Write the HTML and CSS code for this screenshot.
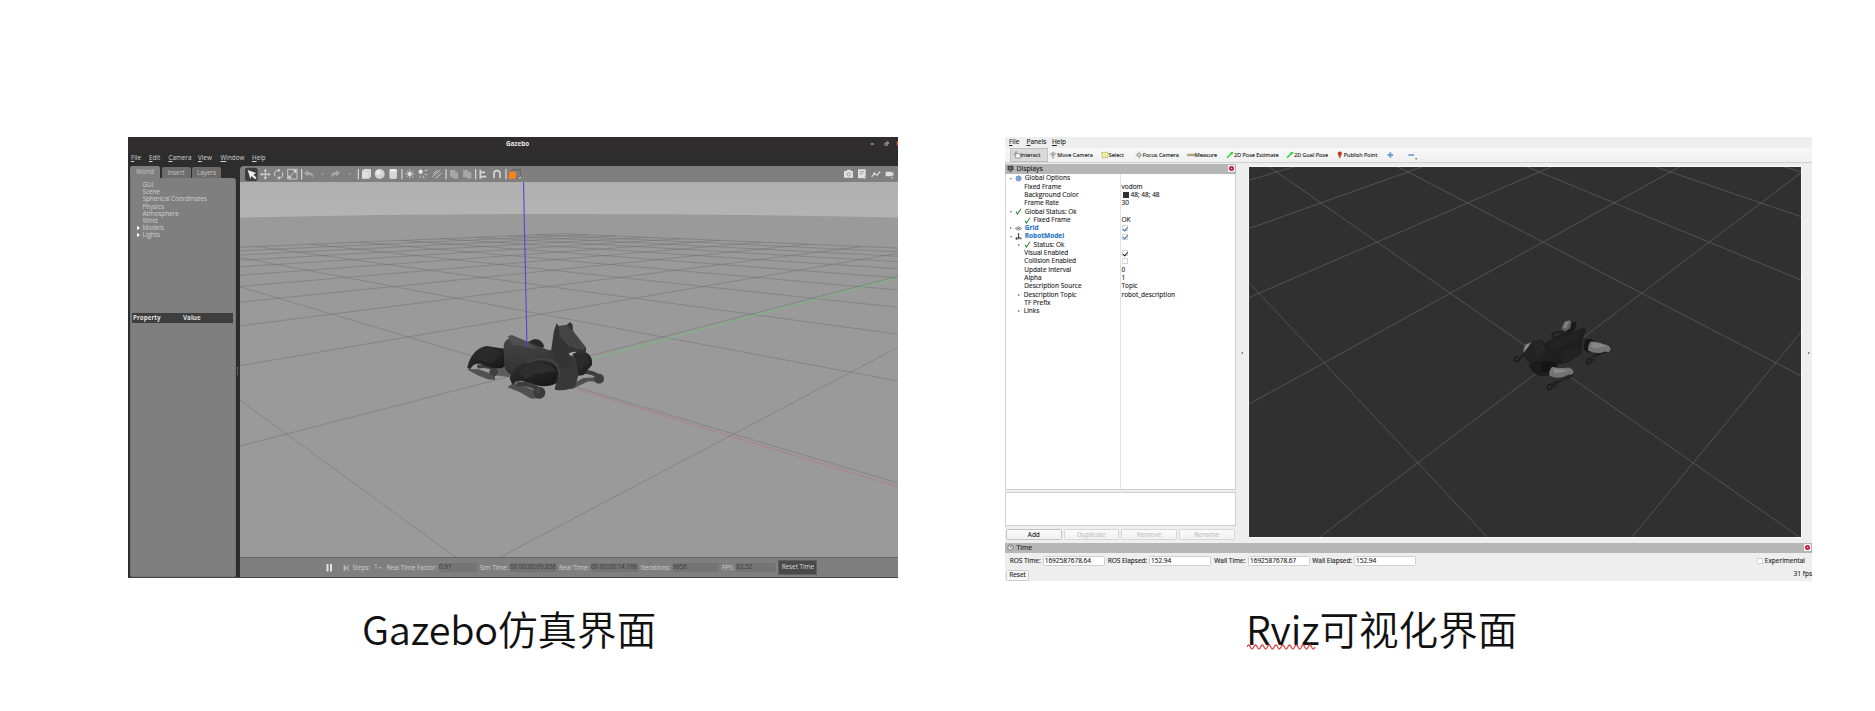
FILE: index.html
```
<!DOCTYPE html>
<html>
<head>
<meta charset="utf-8">
<title>Gazebo / Rviz</title>
<link rel="stylesheet" href="styles.css">
</head>
<body>
<main class="slide">
<figure class="shot shot-gazebo">
  <div class="gazebo">
    <header class="gz-title"><span class="gz-name">Gazebo</span>
      <svg class="gz-winbtns" viewBox="1110 22 84 42"><path d="M1112 43h10" stroke="#c8c8c8" stroke-width="3"/><path d="M1155 40h7v7h-7zM1158 37h7v7" fill="none" stroke="#bbb" stroke-width="2.4"/><rect x="1190" y="35" width="4" height="13" fill="#d9572b"/></svg>
    </header>
    <nav class="gz-menu"><span><u>F</u>ile</span><span><u>E</u>dit</span><span><u>C</u>amera</span><span><u>V</u>iew</span><span><u>W</u>indow</span><span><u>H</u>elp</span></nav>
    <div class="gz-main">
      <aside class="gz-side">
        <div class="gz-tabs"><span class="on">World</span><span>Insert</span><span>Layers</span></div>
        <div class="gz-panel">
          <ul class="gz-tree"><li>GUI</li><li>Scene</li><li>Spherical Coordinates</li><li>Physics</li><li>Atmosphere</li><li>Wind</li><li class="branch">Models</li><li class="branch">Lights</li></ul>
          <div class="gz-props"><span>Property</span><span>Value</span></div>
        </div>
      </aside>
      <div class="gz-split"><i></i></div>
      <section class="gz-view">
        <svg class="gz-tools" viewBox="360 108 1974 48">
          <rect x="375" y="113" width="38" height="40" rx="8" fill="#3d3d3d"/>
          <path d="M383 120l26 9-9 5 10 9-5 5-10-10-4 8z" fill="#eee"/>
          <g fill="none" stroke="#d6d6d6" stroke-width="3">
            <path d="M436 121v24M424 133h24"/>
            <path d="M466 139a11 11 0 0 1 11-18M486 126a11 11 0 0 1-10 18"/>
            <path d="M503 118h28v29h-28zM507 143l20-21" stroke-width="2.5"/>
            <path d="M940 132l13-12M937 141l24-21M946 146l18-16" stroke-width="2.6"/>
            <path d="M1081 119v27M1083 127h12M1083 140h16" stroke-width="5"/>
            <path d="M1122 145v-14a9 9 0 0 1 18 0v14" stroke-width="5"/>
          </g>
          <path d="M436 117l5 7h-10zM436 149l5-7h-10zM420 133l7-5v10zM452 133l-7-5v10zM474 116l8 5-7 6zM479 149l-8-5 7-6zM518 120h11v11zM505 134v11h11z" fill="#d6d6d6"/>
          <path d="M545 117v31M715 117v31M846 117v31M978 117v31M1067 117v31M1158 117v31" stroke="#ddd" stroke-width="3.4"/>
          <g fill="#a6a6a6"><path d="M552 129l12-9v6c12 0 18 8 17 18-4-8-9-9-17-9v5zM660 129l-12-9v6c-12 0-16 8-15 17 4-7 8-8 15-8v5zM604 130h8l-4 5zM685 130h8l-4 5zM990 120h16v22h-16zM1000 127h14v19h-14zM1029 120h15v22h-15zM1042 125h12v21h-12z"/></g>
          <path d="M726 122l7-5h20v22l-6 7h-21z" fill="#dedede"/><path d="M726 123h21l6-6M747 123v23" stroke="#bdbdbd" stroke-width="1.5" fill="none"/>
          <circle cx="779" cy="132" r="15" fill="#d4d4d4"/><circle cx="775" cy="127" r="7" fill="#ececec"/>
          <rect x="808" y="117" width="23" height="30" rx="6" fill="#d6d6d6"/><ellipse cx="819.500" cy="121" rx="11" ry="4" fill="#eee"/>
          <circle cx="869" cy="132" r="6" fill="#e4e4e4"/><path d="M869 118v28M855 132h28M859 122l20 20M879 122l-20 20" stroke="#d8d8d8" stroke-width="2.2"/>
          <circle cx="902" cy="125" r="6.500" fill="#e4e4e4"/><path d="M914 122l9-2M914 132l8 3M908 137l5 9M900 137v6" stroke="#ccc" stroke-width="3"/>
          <path d="M1170 125l10-7h21v20l-12 8M1188 125l12-7M1181 118v8" fill="none" stroke="#5c5c5c" stroke-width="2.400"/><rect x="1167" y="125" width="20" height="21" fill="#ff8410"/><path d="M1195 142h9l-4.500 5z" fill="#ccc"/>
          <path d="M2172 123h7l3-4h9l3 4h5v20h-27z" fill="#e0e0e0"/><circle cx="2186" cy="133" r="5" fill="#e0e0e0" stroke="#888" stroke-width="2"/>
          <path d="M2214 118h23v18l-5 9h-18z" fill="#e0e0e0"/><path d="M2219 125h13M2219 131h10" stroke="#8b8b8b" stroke-width="2"/><path d="M2234 134v10M2229 140l5 6 5-6" stroke="#ddd" stroke-width="2.4" fill="none"/>
          <path d="M2255 141l8-10 8 5 9-11" stroke="#e0e0e0" stroke-width="3.5" fill="none"/><circle cx="2263" cy="130" r="3" fill="#ddd"/>
          <path d="M2297 125h18v14h-18zM2315 130l5-4v13l-5-4z" fill="#e0e0e0"/><path d="M2312 142h9l-4 4z" fill="#ccc"/>
        </svg>
        <svg class="gz-scene" viewBox="240 182 658 375">
          <defs>
            <linearGradient id="sky" x1="0" y1="0" x2="0" y2="1"><stop offset="0" stop-color="#b0b0b0"/><stop offset="1" stop-color="#b4b4b4"/></linearGradient>
            <linearGradient id="hide" x1="0" y1="0" x2="0" y2="1"><stop offset="0" stop-color="#464646"/><stop offset="1" stop-color="#2c2c2c"/></linearGradient>
            <linearGradient id="leg" x1="0" y1="0" x2="1" y2="1"><stop offset="0" stop-color="#303030"/><stop offset="1" stop-color="#161616"/></linearGradient>
          </defs>
          <rect x="240" y="182" width="658" height="40" fill="url(#sky)"/>
          <path d="M240 217.500Q569 210.500 898 217.500V557H240z" fill="#9a9a9a"/>
          <g id="gz-grid" class="gz-grid"></g>
          <path d="M592 359L757 314.500 898 277.500" class="axis-y"/>
          <path d="M568 386.500L898 487" class="axis-x"/>
          <g transform="translate(440 300) scale(.33333)">
            <path d="M80 208l35 0 50 18 0 14-22-2-30-12zM202 262l20-14 60 22 20 24-28 2-35-20zM380 262l50-28 40-2 20 14-45-2-50 24z" fill="#505050"/>
            <path d="M165 202l40 0 10 30-50-6z" fill="#5c5c5c"/>
            <path d="M112 200q25-4 46 4" stroke="#404040" stroke-width="11" fill="none"/><circle cx="161" cy="216" r="13" fill="#404040"/>
            <path d="M82 203c6-34 30-62 58-65l54 8 14 46-22 12c-28 4-52-6-64-12-16-4-26 4-31 16z" fill="url(#leg)"/>
            <path d="M108 168l38-28 40 18-30 32-40-10z" fill="#2c2c2c" opacity=".7"/>
            <path d="M255 130l28-13q24 0 30 25l-45 8z" fill="#292929"/>
            <path d="M420 217q35-4 55 12" stroke="#3c3c3c" stroke-width="12" fill="none"/><circle cx="477" cy="236" r="15" fill="#404040"/>
            <path d="M400 165l38-8q22 14 18 38l-26 30-32 5z" fill="#222"/><path d="M405 170l34-10 10 25-30 25z" fill="#2c2c2c"/>
            <path d="M204 109l12-3 46 19 38 16 40 14 6 84-50 12-62-18c-28-8-42-20-42-46l0-28q-6-36 16-44z" fill="url(#hide)"/>
            <path d="M204 109l12-3 46 19 30 24-46-12-28-2z" fill="#505050"/>
            <path d="M192 190l42 16 56-20 30-36M222 140l24 60 80-30" stroke="#393939" stroke-width="2" fill="none"/>
            <path d="M318 155l22-8 28 16 40 10 8 50-10 36q-26 16-62 10l10-50z" fill="#383838"/>
            <path d="M334 148l8-56 8-22 6 8 24-3 10-9 8 8 1 20 38 48q4 12-4 18l-34 6-22 44-34-36z" fill="#333"/>
            <path d="M356 80l24-3 18 14 38 50-5 10-42-10-30-32z" fill="#454545"/><path d="M382 85l38 60M368 92l32 50M356 104l20 58" stroke="#393939" stroke-width="2"/>
            <path d="M386 160l12-4 12-1-2 5-8 3-8 6z" fill="#aaa"/><path d="M400 160l38-10-5 12-30 5z" fill="#313131"/>
            <path d="M209 235q14-48 80-54 54 2 68 30l-8 38q-26 16-64 6l-30-10q-22-8-38 9z" fill="url(#leg)"/>
            <path d="M235 214l48-30 46 10 20 20-60 8-34 14z" fill="#303030" opacity=".85"/>
            <path d="M260 190q42-22 78-6 20 14 21 50" stroke="#444" stroke-width="5" fill="none"/>
            <path d="M230 252q50-2 66 20" stroke="#3e3e3e" stroke-width="14" fill="none"/><circle cx="298" cy="278" r="18" fill="#3a3a3a"/><circle cx="294" cy="272" r="9" fill="#444"/>
          </g>
          <path d="M523.500 182L527 347" class="axis-z"/>
        </svg>
        <footer class="gz-bar">
          <svg class="pause" viewBox="0 0 8 10"><path d="M1.500 1v7.500M5 1v7.500" stroke="#e2e2e2" stroke-width="2"/></svg>
          <svg class="pause" viewBox="0 0 8 10"><path d="M1 2v6l3-3zM5.200 1.500v7" stroke="#b5b5b5" stroke-width=".9" fill="#b5b5b5"/></svg>
          <span>Steps:</span><span>1 <small>▾</small></span><span>Real Time Factor:</span><b>0.97</b><span>Sim Time:</span><b>00 00:00:09.856</b><span>Real Time:</span><b>00 00:00:14.106</b><span>Iterations:</span><b>9856</b><span>FPS:</span><b>62.52</b><span class="gz-reset">Reset Time</span>
        </footer>
      </section>
    </div>
  </div>
  <figcaption><span class="lat">Gazebo</span>仿真界面</figcaption>
</figure>

<figure class="shot shot-rviz">
  <div class="rviz">
    <nav class="rv-menu"><span><u>F</u>ile</span><span><u>P</u>anels</span><span><u>H</u>elp</span></nav>
    <div class="rv-tools">
      <span class="on"><svg viewBox="0 0 24 24"><path d="M8 21V10L4 12V8l4-1V2h3v7h11v12z" fill="#fff" stroke="#555" stroke-width="1.600"/></svg>Interact</span>
      <span><svg viewBox="0 0 24 24"><path d="M2 9l10-6 10 6-10 5zM12 2v20M7 17l5 5 5-5" fill="none" stroke="#999" stroke-width="2"/><circle cx="12" cy="11" r="4" fill="#999"/></svg>Move Camera</span>
      <span><svg viewBox="0 0 24 24"><path d="M3 4h18v16H3z" fill="#f8f2a0" stroke="#8a8430" stroke-width="2" stroke-dasharray="3 2"/></svg>Select</span>
      <span><svg viewBox="0 0 24 24"><path d="M12 1v22M1 12h22" stroke="#999" stroke-width="2"/><circle cx="12" cy="12" r="6" fill="none" stroke="#999" stroke-width="2.500"/></svg>Focus Camera</span>
      <span><svg viewBox="0 0 24 24"><path d="M1 9h23v6H1z" fill="#b5ad7c" stroke="#8e8863"/></svg>Measure</span>
      <span><svg viewBox="0 0 24 24"><path d="M3 20L20 4" stroke="#15d62a" stroke-width="4"/><path d="M12 5l10-3-4 9z" fill="#15d62a"/></svg>2D Pose Estimate</span>
      <span><svg viewBox="0 0 24 24"><path d="M3 20L20 4" stroke="#15d62a" stroke-width="4"/><path d="M12 5l10-3-4 9z" fill="#15d62a"/></svg>2D Goal Pose</span>
      <span><svg class="pin" viewBox="0 0 18 24"><path d="M8 23l-6-15a6 6 0 0 1 13 0z" fill="#c9462c"/><circle cx="8.500" cy="7" r="2.500" fill="#7c2115"/></svg>Publish Point</span>
      <span><svg viewBox="0 0 24 24"><path d="M10 4v16M2 12h16" stroke="#6d9bd0" stroke-width="5.500"/></svg></span>
      <span><svg viewBox="0 0 30 24" class="wide"><path d="M1 12h17" stroke="#6d9bd0" stroke-width="5"/><path d="M21 22h7l-3.500 4z" fill="#555"/></svg></span>
    </div>
    <div class="rv-main">
      <aside class="rv-displays">
        <div class="rv-head"><svg viewBox="0 0 24 24"><path d="M2 3h20v15H2z" fill="#343434"/><path d="M5 6h5v9H5z" fill="#b53b4c"/><path d="M10 6h4v9h-4z" fill="#3c9a53"/><path d="M14 6h5v9h-5z" fill="#4b5eb5"/><path d="M7 21h10" stroke="#333" stroke-width="3"/></svg><span>Displays</span><i class="close"></i></div>
        <ul class="rv-tree">
          <li><em><i class="open"></i><svg viewBox="0 0 20 20"><circle cx="10" cy="10" r="7" fill="#7da5dc" stroke="#4b79b9" stroke-width="3" stroke-dasharray="3 2"/></svg>Global Options</em></li>
          <li><em class="leaf">Fixed Frame</em><span>vodom</span></li>
          <li><em class="leaf">Background Color</em><span><i class="swatch"></i>48; 48; 48</span></li>
          <li><em class="leaf">Frame Rate</em><span>30</span></li>
          <li><em><i class="open"></i><svg viewBox="0 0 20 20"><path d="M3 11l4 6L17 2" class="tick"/></svg>Global Status: Ok</em></li>
          <li><em class="sub"><i></i><svg viewBox="0 0 20 20"><path d="M3 11l4 6L17 2" class="tick"/></svg>Fixed Frame</em><span>OK</span></li>
          <li><em class="hot"><i class="shut"></i><svg viewBox="0 0 20 20"><path d="M1 10l9-5 9 5-9 5zM5 7l10 6M15 7L5 13" fill="none" stroke="#666" stroke-width="2"/></svg>Grid</em><span><i class="box blue"></i></span></li>
          <li><em class="hot"><i class="open"></i><svg viewBox="0 0 20 20"><path d="M8 1h4v5H8zM9 6h3v7H9zM2 13h5v6H2zM9 14h4v4H9zM15 14h4v4h-4zM4 12h12v2H4z" fill="#444"/></svg>RobotModel</em><span><i class="box blue"></i></span></li>
          <li><em class="sub"><i class="shut"></i><svg viewBox="0 0 20 20"><path d="M3 11l4 6L17 2" class="tick"/></svg>Status: Ok</em></li>
          <li><em class="leaf">Visual Enabled</em><span><i class="box dark"></i></span></li>
          <li><em class="leaf">Collision Enabled</em><span><i class="box"></i></span></li>
          <li><em class="leaf">Update Interval</em><span>0</span></li>
          <li><em class="leaf">Alpha</em><span>1</span></li>
          <li><em class="leaf">Description Source</em><span>Topic</span></li>
          <li><em class="sub"><i class="shut"></i>Description Topic</em><span>robot_description</span></li>
          <li><em class="leaf">TF Prefix</em></li>
          <li><em class="sub"><i class="shut"></i>Links</em></li>
        </ul>
        <div class="rv-help"></div>
        <div class="rv-buttons"><span class="live">Add</span><span>Duplicate</span><span>Remove</span><span>Rename</span></div>
      </aside>
      <div class="rv-grip"><i class="left"></i></div>
      <svg class="rv-scene" viewBox="1249.500 167.500 552 369.500">
        <g id="rv-grid" class="rv-grid"></g>
        <g transform="translate(1480 300) scale(.33333)">
          <g fill="none" stroke="#1c1c1c" stroke-width="5" stroke-linecap="round"><path d="M132 164l-12 16q-10 12-15 2 0-14 12-8M252 96l-28 4q-12 8-2 15 12 0 22-8M392 140l-10 16-40 14-10 20q-14 8-10-6 8-12 20-2M280 224l-10 10-44 14-10 18q-14 12-12-6 6-10 14-2" /></g>
          <path d="M386 146l-38 18-14 18M272 230l-36 18-16 16" stroke="#242424" stroke-width="8" fill="none"/>
          <path d="M130 154l8-20 18-6 6 20-24 18z" fill="#696969"/><path d="M134 146l8-12 10-2-12 22z" fill="#888"/>
          <path d="M245 88l10-22 14-4 12 8-2 16-20 12z" fill="#606060"/><path d="M250 84l8-18 12 0-10 20z" fill="#808080"/>
          <path d="M276 66l14 2 0 16-10 12-26 2 18-12z" fill="#1a1a1a"/>
          <path d="M190 134l60-34 36-4 28-14 4 8-10 42-2 30-42 28-46 8-30-10z" fill="#1f1f1f"/>
          <path d="M200 140l60-32 52-18-26 32-40 22zM240 160l52-22 12 20-48 32z" fill="#232323"/>
          <path d="M132 162l26-36 26-6 12 10 10 30-16 24-28 10-24-12z" fill="#222"/><path d="M160 130l24-4 14 20-24 30z" fill="#272727"/>
          <path d="M148 192l26-6 26-2 30 4 6 18-12 20-40 4q-32-10-36-38z" fill="#1c1c1c"/><path d="M186 188l30-2 18 12-22 22-30-6z" fill="#151515"/>
          <path d="M316 120l18-2 14 8-4 30-18 4-14-10z" fill="#171717"/>
          <path d="M334 126q18-2 38 8 20 2 22 14l-5 10-13-2q-20 10-50-2-2-16 8-28z" fill="#747474"/><path d="M338 130q24-2 44 10l-38 6-10-4z" fill="#868686"/>
          <path d="M218 202q26 6 48 2 16 4 16 14l-4 8-12-1q-26 18-56 4-4-14 8-27z" fill="#747474"/><path d="M222 206q26 4 48 8l-40 8-8-4z" fill="#898989"/>
        </g>
      </svg>
      <div class="rv-grip"><i class="right"></i></div>
    </div>
    <div class="rv-head rv-timehead"><svg viewBox="0 0 24 24"><circle cx="12" cy="12" r="9" fill="#eee" stroke="#444" stroke-width="2"/><path d="M12 6v7l5-3" fill="none" stroke="#444" stroke-width="2"/></svg><span>Time</span><i class="close"></i></div>
    <div class="rv-time"><span>ROS Time:</span><b>1692587678.64</b><span>ROS Elapsed:</span><b>152.94</b><span>Wall Time:</span><b>1692587678.67</b><span>Wall Elapsed:</span><b>152.94</b><span class="exp"><i class="box"></i>Experimental</span></div>
    <footer class="rv-foot"><span class="rv-reset">Reset</span><span>31 fps</span></footer>
  </div>
  <figcaption><span class="lat squiggle">Rviz<svg viewBox="0 0 69 6"><path d="M0 3q1.700-4 3.400 0t3.400 0 3.400 0 3.400 0 3.400 0 3.400 0 3.400 0 3.400 0 3.400 0 3.400 0 3.400 0 3.400 0 3.400 0 3.400 0 3.400 0 3.400 0 3.400 0 3.400 0 3.400 0 3.400 0" fill="none" stroke="#dc4b4b" stroke-width="1.300"/></svg></span>可视化界面</figcaption>
</figure>
</main>
<script src="scene.js"></script>
</body>
</html>
```
FILE: styles.css
```
* { box-sizing: border-box; }
body { margin: 0; background: #fff; font-family: "Open Sans", "Noto Sans", sans-serif; }
i, em { font-style: normal; }
ul { margin: 0; padding: 0; list-style: none; }
svg { display: block; flex: none; }
.slide { width: 1875px; height: 711px; padding: 137px 0 0 128px; display: flex; align-items: flex-start; gap: 107px; overflow: hidden; }
.shot { margin: 0; flex: none; }
.shot-gazebo { width: 770px; }
.shot-rviz { width: 807px; }
figcaption { height: 60px; line-height: 60px; font-family: "Noto Sans CJK SC", sans-serif; font-weight: 350; font-size: 39.600px; color: #111; white-space: nowrap; }
.shot-gazebo figcaption { margin: 20px 0 0 234px; }
.shot-rviz figcaption { margin: 17px 0 0 241px; }
.lat { display: inline-block; letter-spacing: -.2px; }
.squiggle { position: relative; }
.squiggle svg { position: absolute; left: 1px; bottom: 8px; width: 69px; height: 6px; }

.gazebo { height: 441px; display: flex; flex-direction: column; background: #2d2d2d; font-size: 6.3px; line-height: 8px; color: #d2d2d2; border-bottom: 1px solid #444; }
.gz-title { height: 14.500px; background: #302d2e; display: flex; align-items: center; }
.gz-name { margin-left: 378px; width: 364px; font-weight: 700; font-size: 6.300px; color: #e8e8e8; }
.gz-winbtns { width: 28px; height: 14px; }
.gz-menu { height: 14.500px; display: grid; grid-template-columns: 18px 19.500px 29.500px 22.500px 31.500px 30px; padding: 0 0 3px 3px; align-items: center; line-height: 11px; }
.gz-menu u, .rv-menu u { text-underline-offset: 1px; text-decoration-thickness: .6px; }
.gz-main { flex: 1; display: flex; min-height: 0; }
.gz-side { width: 106px; margin-left: 2px; display: flex; flex-direction: column; }
.gz-tabs { height: 12px; display: flex; align-items: flex-end; gap: 1.500px; }
.gz-tabs span { height: 11px; width: 29px; background: #6c6c6c; border-radius: 2px 2px 0 0; text-align: center; line-height: 11px; color: #c6c6c6; }
.gz-tabs .on { height: 12px; width: 30px; background: #7f7f7f; }
.gz-panel { flex: 1; background: #7f7f7f; border-radius: 0 3px 2px 2px; border: 1px solid #747474; border-top: 0; padding-top: 3px; }
.gz-tree { height: 132px; padding-left: 11.500px; line-height: 7.200px; color: #cfcfcf; }
.gz-tree li { position: relative; height: 7.200px; }
.gz-tree .branch::before { content: ""; position: absolute; left: -6px; top: 1.500px; border-left: 3.500px solid #fff; border-top: 2.300px solid transparent; border-bottom: 2.300px solid transparent; }
.gz-props { margin: 0 2px 0 1px; height: 9.500px; background: #3d3d3d; display: grid; grid-template-columns: 50px 1fr; line-height: 9.500px; font-weight: 700; color: #ddd; padding-left: 1px; }
.gz-split { width: 4px; display: flex; align-items: center; }
.gz-split i { width: 2px; height: 8px; margin: 0 1px; border-left: 1px dotted #777; margin-top: -1px; }
.gz-view { width: 658px; display: flex; flex-direction: column; }
.gz-tools { width: 658px; height: 16px; background: #7f7f7f; border-radius: 4px 0 0 0; }
.gz-scene { width: 658px; height: 375px; }
.gz-grid { stroke: #6e6e6e; stroke-width: .8; stroke-opacity: .6; fill: none; }
.axis-x { stroke: #b87878; stroke-width: .7; fill: none; }
.axis-y { stroke: #74c074; stroke-width: .8; fill: none; }
.axis-z { stroke: #4a4ad6; stroke-width: 1.100; fill: none; }
.gz-bar { flex: 1; background: #7f7f7f; border-top: 1px solid #666; display: grid; grid-template-columns: 17px 9.500px 21.500px 12.700px 52.300px 40.700px 30.300px 49px 32px 49.700px 31.900px 49.400px 14.400px 42px 39px; padding-left: 86px; align-items: center; white-space: nowrap; font-size: 6.300px; color: #cdcdcd; }
.gz-bar b { font-weight: 400; height: 8.500px; margin-right: 2.500px; background: #747474; border-radius: 1.500px; color: #3a3a3a; line-height: 8.500px; }
.gz-bar small { font-size: 4px; }
.pause { width: 8px; height: 10px; }
.gz-reset { height: 14.500px; background: #4a4a4a; border: 1px solid #606060; color: #dcdcdc; text-align: center; line-height: 12.500px; }

.rviz { height: 444px; background: #eee; display: flex; flex-direction: column; font-size: 6.500px; line-height: 8.300px; color: #1c1c1c; -webkit-text-stroke: .12px; }
.rv-menu { height: 10.500px; display: grid; grid-template-columns: 17.500px 25.500px 20px; padding-left: 4px; line-height: 10.500px; }
.rv-tools { height: 15.500px; background: linear-gradient(#f8f8f8, #f0f0f0); border-bottom: 1px solid #d0d0d0; display: grid; grid-template-columns: 39.300px 51.400px 34px 52px 39.300px 60px 51.300px 49.400px 21.300px 20px; padding-left: 5px; align-items: center; font-size: 5.500px; white-space: nowrap; }
.rv-tools span { display: flex; align-items: center; height: 14px; }
.rv-tools svg { width: 8px; height: 8px; }
.rv-tools .pin { width: 6px; margin-right: .5px; }
.rv-tools .wide { width: 10px; overflow: visible; }
.rv-tools .on { background: #d9d9d9; border: .5px solid #c0c0c0; width: 38px; padding-left: 1.500px; }
.rv-main { height: 380.500px; display: flex; }
.rv-displays { width: 230.500px; padding-top: 1px; display: flex; flex-direction: column; }
.rv-head { height: 9.800px; background: #b6b6b6; display: flex; align-items: center; font-size: 6.800px; padding-left: 2px; }
.rv-head svg { width: 7px; height: 7px; margin-right: 2.500px; }
.rv-head span { flex: 1; }
.close { width: 7px; height: 7px; background: radial-gradient(circle, #f3c9d0 0 .8px, #d22b4b 1px 2.300px, #f2f2f2 2.700px); margin-right: 1px; border-radius: 1px; }
.rv-tree { height: 316px; background: linear-gradient(90deg, transparent 114px, #e2e2e2 114px 115px, transparent 115px) #fff; border: 1px solid #d0d0d0; border-top: 0; padding-top: .6px; }
.rv-tree li { height: 8.310px; display: flex; }
.rv-tree em { width: 115.500px; padding-left: 2px; display: flex; align-items: center; white-space: nowrap; }
.rv-tree em > i { width: 5px; margin-right: 2px; display: flex; justify-content: center; }
.rv-tree em svg { width: 7px; height: 7px; margin-right: 2.800px; }
.rv-tree em.leaf { padding-left: 18.300px; }
.rv-tree em.sub { padding-left: 10.800px; }
.rv-tree .hot { color: #2676c4; font-weight: 700; }
.open::before { content: ""; border-top: 2px solid #777; border-left: 1.500px solid transparent; border-right: 1.500px solid transparent; }
.shut::before { content: ""; border-left: 2px solid #666; border-top: 1.500px solid transparent; border-bottom: 1.500px solid transparent; }
.tick { fill: none; stroke: #258a35; stroke-width: 3; }
.rv-tree span { display: flex; align-items: center; }
.swatch { width: 6px; height: 6px; margin: 0 2px 0 1px; background: #303030; }
.box { position: relative; width: 6px; height: 6px; border: 1px solid #d4d4d4; background: #fff; display: block; }
.box.blue::after, .box.dark::after { content: ""; position: absolute; left: 1px; top: -.5px; width: 1.800px; height: 3.500px; border: solid #3a6fb5; border-width: 0 1px 1px 0; transform: rotate(40deg); }
.box.dark::after { border-color: #222; }
.rv-help { height: 34px; margin-top: 2.500px; background: #fff; border: 1px solid #d0d0d0; }
.rv-buttons { display: flex; gap: 2px; padding: 2.500px 1px 0; }
.rv-buttons span { flex: 1; height: 11.500px; background: linear-gradient(#fbfbfb, #f1f1f1); border: 1px solid #d6d6d6; border-radius: 1.500px; text-align: center; line-height: 9.500px; color: #c3c3c3; }
.rv-buttons .live { color: #222; border-color: #c2c2c2; }
.rv-grip { width: 13.500px; display: flex; align-items: center; justify-content: center; }
.rv-grip:last-child { width: 11px; justify-content: flex-end; padding-right: 2px; }
.left::before { content: ""; display: block; border-right: 2px solid #555; border-top: 1.500px solid transparent; border-bottom: 1.500px solid transparent; }
.right::before { content: ""; display: block; border-left: 2px solid #555; border-top: 1.500px solid transparent; border-bottom: 1.500px solid transparent; }
.rv-scene { width: 552px; height: 369.500px; margin-top: 4.500px; background: #303030; outline: 1px solid #fafafa; }
.rv-grid { stroke: #5c5c5c; stroke-width: .8; fill: none; }
.rv-time { height: 17px; display: grid; grid-template-columns: 33px 65px 41.300px 65.300px 33.700px 64.300px 41.700px 64px 1fr; align-items: center; padding: 0 7px 0 4.700px; white-space: nowrap; }
.rv-time b { font-weight: 400; height: 10.500px; width: 62px; background: #fff; border: 1px solid #d0d0d0; border-radius: 1.500px; line-height: 8.500px; padding-left: 1px; }
.rv-time .exp { display: flex; justify-content: flex-end; align-items: center; }
.exp .box { margin-right: 2px; }
.rv-foot { flex: 1; display: flex; justify-content: space-between; align-items: center; padding-left: 1px; }
.rv-foot span:last-child { margin-bottom: 3px; }
.rv-reset { width: 23px; height: 10.500px; background: #f8f8f8; border: 1px solid #ccc; border-radius: 1.500px; text-align: center; line-height: 8.500px; }
```
FILE: scene.js
```
// Ground grids of the two 3D viewports, projected to line segments.
function addLine(id, a, b) {
  const l = document.createElementNS("http://www.w3.org/2000/svg", "line");
  l.setAttribute("x1", a[0].toFixed(1));
  l.setAttribute("y1", a[1].toFixed(1));
  l.setAttribute("x2", b[0].toFixed(1));
  l.setAttribute("y2", b[1].toFixed(1));
  document.getElementById(id).appendChild(l);
}

// Gazebo: pitched pinhole camera over a 20 x 20 m grid.
const cam = { h: 0.66, cos: 0.9623, sin: 0.2722, f: 570, cx: 569, cy: 369.5 };
const ground = (x, y) => [2.292 + 0.679 * (y - x), -0.179 + 0.679 * (x + y)];
const depth = (g) => g[0] * cam.cos + cam.h * cam.sin;
function project(g) {
  const d = depth(g);
  return [cam.cx + cam.f * g[1] / d, cam.cy - cam.f * (g[0] * cam.sin - cam.h * cam.cos) / d];
}
function groundLine(a, b) {
  const near = 0.3;
  if (depth(a) < near && depth(b) < near) return;
  if (depth(a) < near) [a, b] = [b, a];
  if (depth(b) < near) {
    const t = (depth(a) - near) / (depth(a) - depth(b));
    b = [a[0] + (b[0] - a[0]) * t, a[1] + (b[1] - a[1]) * t];
  }
  addLine("gz-grid", project(a), project(b));
}
for (let i = -10; i <= 10; i++) {
  groundLine(ground(i, -10), ground(i, 10));
  groundLine(ground(-10, i), ground(10, i));
}

// Rviz: diagonal grid, rows shrink with distance n.
function cell(n, m) {
  const s = 1 / (0.003631 + 0.000797 * n);
  const y = 172.3 + (s - 131.2) / 0.4955;
  return [1539.7 + 0.0561 * (y - 172.3) + m * s / 2, y];
}
for (let c = -11; c <= 11; c += 2) {
  addLine("rv-grid", cell(-2, c - 2), cell(7, c + 7));
  addLine("rv-grid", cell(-2, c + 2), cell(7, c - 7));
}
```
